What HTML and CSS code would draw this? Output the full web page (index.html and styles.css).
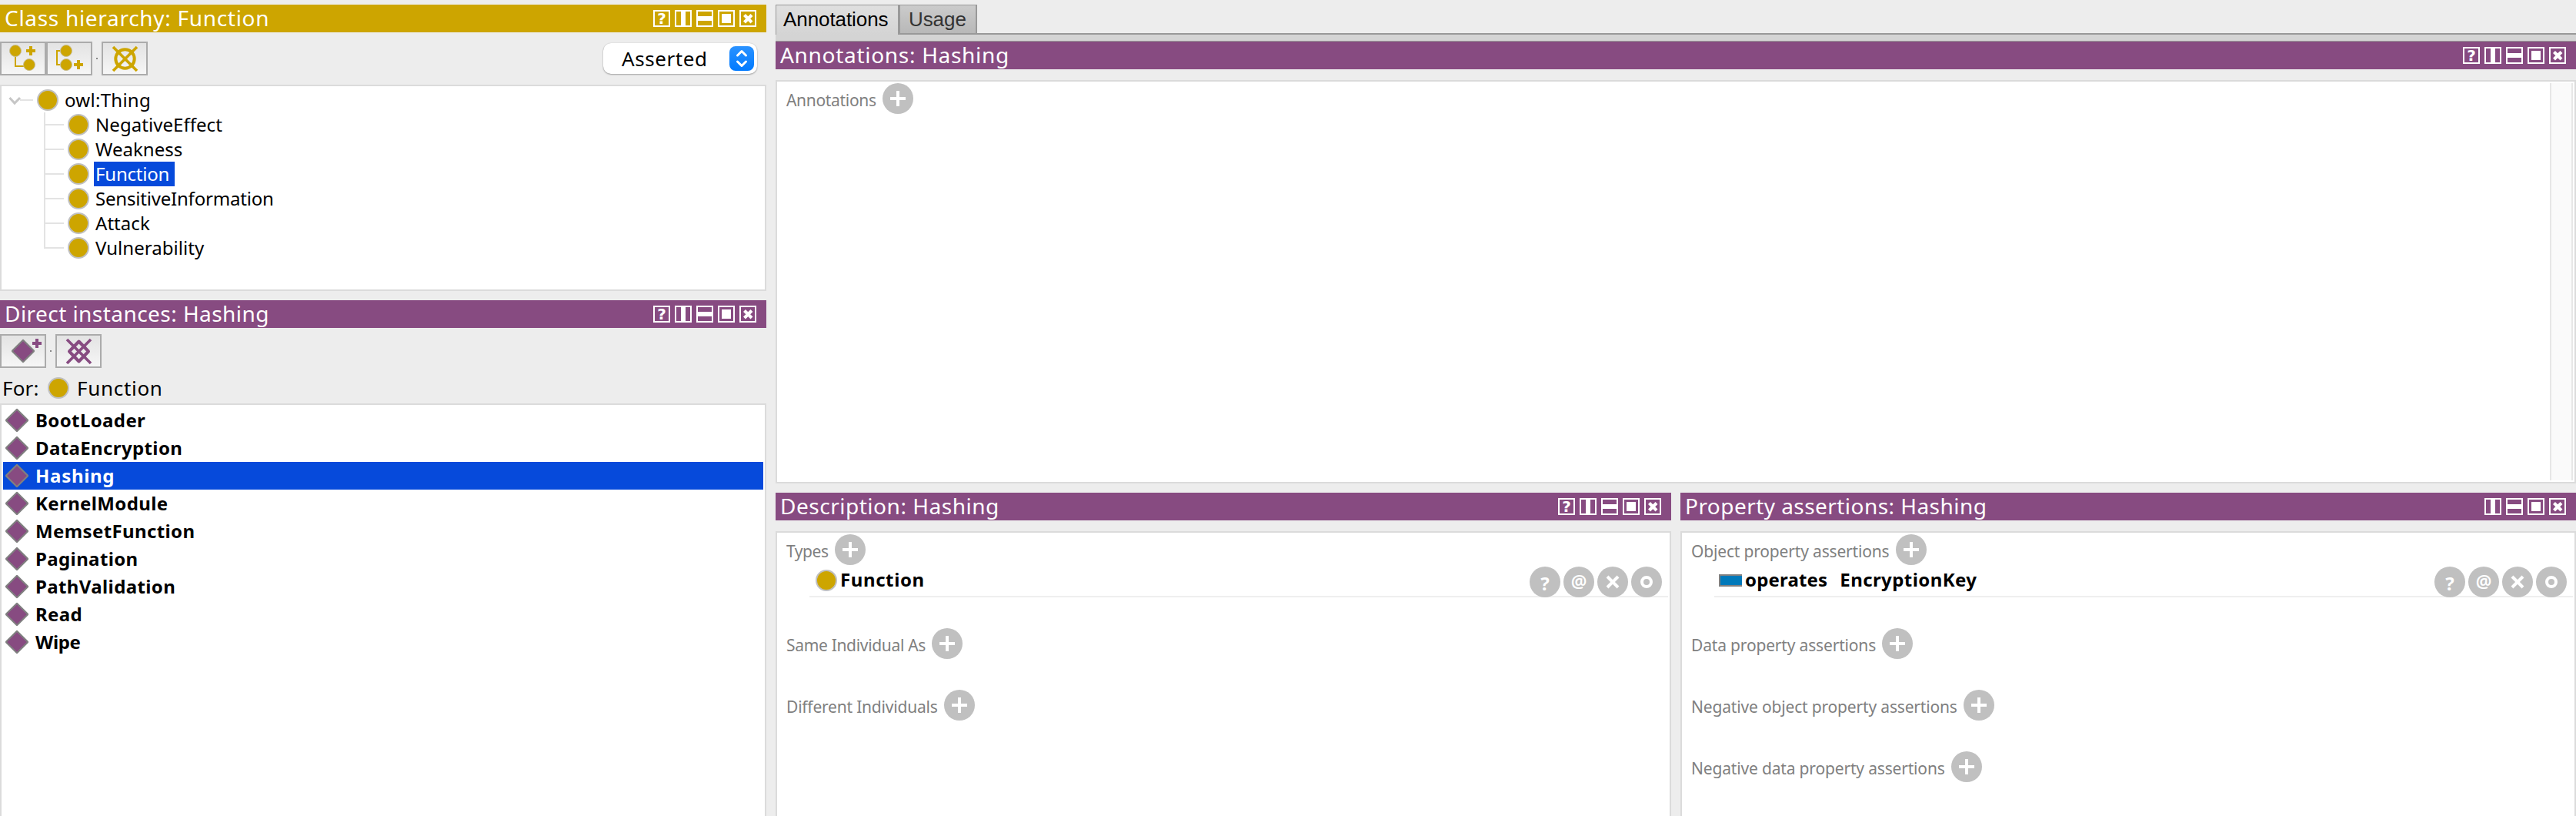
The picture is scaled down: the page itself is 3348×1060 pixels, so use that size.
FILE: index.html
```html
<!DOCTYPE html>
<html lang="en">
<head>
<meta charset="utf-8">
<title>Hashing</title>
<link rel="stylesheet" href="styles.css">
</head>
<body>
<svg class="defs" aria-hidden="true">
  <symbol id="cols" viewBox="0 0 22 22"><rect class="frame" x="1" y="1" width="20" height="20"/><path d="M8 1h6v20H8z"/></symbol>
  <symbol id="rows" viewBox="0 0 22 22"><rect class="frame" x="1" y="1" width="20" height="20"/><path d="M1 8h20v6H1z"/></symbol>
  <symbol id="max" viewBox="0 0 22 22"><rect class="frame" x="1" y="1" width="20" height="20"/><path d="M5 5h12v12H5z"/></symbol>
  <symbol id="close" viewBox="0 0 22 22"><rect class="frame" x="1" y="1" width="20" height="20"/><path d="M6.500 6.500l9.500 9.500M16 6.500l-9.500 9.500" stroke="#fff" stroke-width="4.2"/></symbol>
  <symbol id="class" viewBox="0 0 28 28"><circle cx="14" cy="14" r="13" fill="#cda500" stroke="#c0c0c0" stroke-width="2"/></symbol>
  <symbol id="individual" viewBox="0 0 32 32"><path d="M16 2.600L29.400 16 16 29.400 2.600 16z" fill="#874b81" stroke="#808080" stroke-width="3.4" stroke-linejoin="round"/><path d="M16 3.200L28.800 16 16 28.800 3.200 16z" fill="#874b81"/></symbol>
  <symbol id="add" viewBox="0 0 40 40"><circle cx="20" cy="20" r="20" fill="#c0c0c0"/><path d="M10 18h8v-8h4v8h8v4h-8v8h-4v-8h-8z" fill="#fff"/></symbol>
  <symbol id="a-del" viewBox="0 0 40 40"><circle cx="20" cy="20" r="20" fill="#c0c0c0"/><path d="M13 13l14 14M27 13L13 27" stroke="#fff" stroke-width="4"/></symbol>
  <symbol id="a-edit" viewBox="0 0 40 40"><circle cx="20" cy="20" r="20" fill="#c0c0c0"/><circle cx="20" cy="20" r="6" fill="none" stroke="#fff" stroke-width="4"/></symbol>
</svg>

<main class="app">
  <aside class="side">
    <section class="panel hierarchy">
      <header class="bar gold"><h2 class="k7">Class hierarchy: Function</h2>
        <div class="tools"><span class="help">?</span><svg><use href="#cols"/></svg><svg><use href="#rows"/></svg><svg><use href="#max"/></svg><svg><use href="#close"/></svg></div>
      </header>
      <div class="toolbar">
        <button class="tool"><svg viewBox="0 0 56 40"><path d="M18 12v18h16" fill="none" stroke="#cda500" stroke-width="2"/><g fill="#cda500" stroke="#c8bd92"><circle cx="18" cy="10" r="7.5"/><circle cx="36" cy="28" r="7.5"/></g><path d="M32 8h4V4h4v4h4v4h-4v4h-4v-4h-4z" fill="#cda500"/></svg></button>
        <button class="tool"><svg viewBox="0 0 56 40"><path d="M24 10H12v18h12" fill="none" stroke="#cda500" stroke-width="2"/><g fill="#cda500" stroke="#c8bd92"><circle cx="24" cy="10" r="7.5"/><circle cx="24" cy="28" r="7.5"/></g><path d="M34 26h4v-4h4v4h4v4h-4v4h-4v-4h-4z" fill="#cda500"/></svg></button>
        <i class="dot"></i>
        <button class="tool"><svg viewBox="0 0 56 40"><g fill="none" stroke="#cda500" stroke-width="4"><circle cx="28.5" cy="20.5" r="12.2"/><path d="M13 5l31 31M44 5L13 36" stroke-width="3.6"/></g></svg></button>
        <div class="combo"><span>Asserted</span><svg viewBox="0 0 32 32"><defs><linearGradient id="blue" x2="0" y2="1"><stop stop-color="#2a92ff"/><stop offset="1" stop-color="#017aff"/></linearGradient></defs><rect width="32" height="32" rx="8" fill="url(#blue)"/><path d="M10.500 12l5.500-5.500 5.500 5.500M10.500 20l5.500 5.500 5.500-5.500" fill="none" stroke="#fff" stroke-width="3" stroke-linecap="round" stroke-linejoin="round"/></svg></div>
      </div>
      <div class="well tree">
        <div class="node root"><svg class="twisty" viewBox="0 0 36 32"><path d="M16 16h17" stroke="#e3e3e3" stroke-width="2"/><path d="M2.500 13l6.500 7L16 13" fill="none" stroke="#c6c6c6" stroke-width="3"/></svg><svg class="ci"><use href="#class"/></svg><span class="k3">owl:Thing</span></div>
        <ul class="children">
          <li class="node"><svg class="ci"><use href="#class"/></svg><span class="k05">NegativeEffect</span></li>
          <li class="node"><svg class="ci"><use href="#class"/></svg><span class="k05">Weakness</span></li>
          <li class="node current"><svg class="ci"><use href="#class"/></svg><span class="m2">Function</span></li>
          <li class="node"><svg class="ci"><use href="#class"/></svg><span class="m2">SensitiveInformation</span></li>
          <li class="node"><svg class="ci"><use href="#class"/></svg><span class="k05">Attack</span></li>
          <li class="node"><svg class="ci"><use href="#class"/></svg><span class="k05">Vulnerability</span></li>
        </ul>
      </div>
    </section>

    <section class="panel instances">
      <header class="bar"><h2 class="k45">Direct instances: Hashing</h2>
        <div class="tools"><span class="help">?</span><svg><use href="#cols"/></svg><svg><use href="#rows"/></svg><svg><use href="#max"/></svg><svg><use href="#close"/></svg></div>
      </header>
      <div class="toolbar tight">
        <button class="tool"><svg viewBox="0 0 56 40"><use href="#individual" x="12" y="4" width="32" height="32"/><path d="M40 8h4V4h4v4h4v4h-4v4h-4v-4h-4z" fill="#874b81"/></svg></button>
        <i class="dot"></i>
        <button class="tool"><svg viewBox="0 0 56 40"><g fill="none" stroke="#874b81" stroke-width="3.6"><path d="M28.500 7.500L41 20.500 28.500 33.500 16 20.500z" stroke-width="4" stroke-linejoin="round"/><path d="M13 5l31 31M44 5L13 36"/></g></svg></button>
      </div>
      <div class="for"><span class="k2">For:</span><svg class="ci"><use href="#class"/></svg><span class="k7">Function</span></div>
      <ul class="well list">
        <li><svg><use href="#individual"/></svg><span>BootLoader</span></li>
        <li><svg><use href="#individual"/></svg><span>DataEncryption</span></li>
        <li class="current"><svg><use href="#individual"/></svg><span class="k7">Hashing</span></li>
        <li><svg><use href="#individual"/></svg><span>KernelModule</span></li>
        <li><svg><use href="#individual"/></svg><span>MemsetFunction</span></li>
        <li><svg><use href="#individual"/></svg><span>Pagination</span></li>
        <li><svg><use href="#individual"/></svg><span>PathValidation</span></li>
        <li><svg><use href="#individual"/></svg><span>Read</span></li>
        <li><svg><use href="#individual"/></svg><span class="m3">Wipe</span></li>
      </ul>
    </section>
  </aside>

  <div class="work">
    <nav class="tabs"><a class="tab on">Annotations</a><a class="tab">Usage</a></nav>
    <div class="strip"></div>
    <section class="panel annotations">
      <header class="bar"><h2 class="k7">Annotations: Hashing</h2>
        <div class="tools"><span class="help">?</span><svg><use href="#cols"/></svg><svg><use href="#rows"/></svg><svg><use href="#max"/></svg><svg><use href="#close"/></svg></div>
      </header>
      <div class="well split">
        <div class="group"><div class="label"><span class="m3">Annotations</span><svg><use href="#add"/></svg></div></div>
        <div class="scroll"></div>
      </div>
    </section>

    <div class="pair">
      <section class="panel">
        <header class="bar"><h2 class="k5">Description: Hashing</h2>
          <div class="tools"><span class="help">?</span><svg><use href="#cols"/></svg><svg><use href="#rows"/></svg><svg><use href="#max"/></svg><svg><use href="#close"/></svg></div>
        </header>
        <div class="well open">
          <div class="group">
            <div class="label"><span class="m4">Types</span><svg><use href="#add"/></svg></div>
            <div class="item"><svg class="ci"><use href="#class"/></svg><b class="k6">Function</b>
              <div class="acts"><span class="act">?</span><span class="act at">@</span><svg><use href="#a-del"/></svg><svg><use href="#a-edit"/></svg></div></div>
          </div>
          <div class="group"><div class="label"><span class="m3">Same Individual As</span><svg><use href="#add"/></svg></div></div>
          <div class="group"><div class="label"><span class="m2">Different Individuals</span><svg><use href="#add"/></svg></div></div>
        </div>
      </section>
      <section class="panel">
        <header class="bar"><h2 class="k45">Property assertions: Hashing</h2>
          <div class="tools"><svg><use href="#cols"/></svg><svg><use href="#rows"/></svg><svg><use href="#max"/></svg><svg><use href="#close"/></svg></div>
        </header>
        <div class="well open">
          <div class="group">
            <div class="label"><span>Object property assertions</span><svg><use href="#add"/></svg></div>
            <div class="item prop"><i class="swatch"></i><b class="k2">operates</b><b class="value">EncryptionKey</b>
              <div class="acts"><span class="act">?</span><span class="act at">@</span><svg><use href="#a-del"/></svg><svg><use href="#a-edit"/></svg></div></div>
          </div>
          <div class="group"><div class="label"><span>Data property assertions</span><svg><use href="#add"/></svg></div></div>
          <div class="group"><div class="label"><span>Negative object property assertions</span><svg><use href="#add"/></svg></div></div>
          <div class="group"><div class="label"><span>Negative data property assertions</span><svg><use href="#add"/></svg></div></div>
        </div>
      </section>
    </div>
  </div>
</main>
</body>
</html>
```
FILE: styles.css
```css
* { box-sizing: border-box; }
body { margin: 0; background: #ededed; color: #000; font-family: "Noto Sans", sans-serif; overflow: hidden; }
svg { display: block; flex: none; }
ul { list-style: none; margin: 0; padding: 0; }
span, b, h2, a { white-space: nowrap; }
.defs { position: absolute; width: 0; height: 0; }

.app { display: grid; grid-template-columns: 996px 1fr; column-gap: 12px; height: 1060px; }
.side, .work, .panel { display: flex; flex-direction: column; min-width: 0; min-height: 0; }
.side { padding-top: 6px; gap: 12px; }
.work { padding-top: 6px; }
.hierarchy { height: 372px; }
.instances { flex: 1; }

/* panel title bars */
.bar { display: flex; justify-content: space-between; flex: none; height: 36px; padding: 0 13px 0 6px; background: #874b81; color: #fff; }
.bar.gold { background: #cda500; }
.bar h2 { margin: 0; font-size: 28px; font-weight: 400; line-height: 34px; }
.tools { display: flex; gap: 6px; padding-top: 7px; }
.tools svg { width: 22px; height: 22px; fill: #fff; }
.frame { fill: none; stroke: #fff; stroke-width: 2px; }
.help { width: 22px; height: 22px; border: 2px solid #fff; font: 700 20px/19px "DejaVu Sans", sans-serif; text-align: center; }

/* toolbars */
.toolbar { display: flex; align-items: center; flex: none; height: 68px; padding: 0 12px 0 0; }
.toolbar.tight { height: 52px; padding-top: 8px; }
.tool { width: 60px; height: 44px; padding: 0; border: 2px solid #ababab; background: linear-gradient(#e3e3e3, #f6f6f6); }
.tool svg { width: 56px; height: 40px; }
.dot { width: 2px; height: 2px; margin: 0 5px; background: #888; }
.combo { display: flex; align-items: center; justify-content: space-between; width: 200px; height: 40px; margin-left: auto; padding: 0 4px 0 24px; border-radius: 10px; background: #fff; box-shadow: 0 1px 2px rgba(0,0,0,.3), 0 0 1px rgba(0,0,0,.25); font-size: 26px; line-height: 40px; letter-spacing: .58px; }
.combo svg { width: 32px; height: 32px; }

/* content wells */
.well { flex: 1; min-height: 0; border: 2px solid #dbdbdb; background: #fff; }
.ci { width: 28px; height: 28px; }
.tree { padding-top: 2px; font-size: 24px; line-height: 32px; }
.node { display: flex; align-items: center; height: 32px; }
.node.root { padding-left: 8px; }
.twisty { width: 36px; height: 32px; margin-right: 2px; }
.root .ci { margin-right: 8px; }
.children { margin-left: 55px; background: linear-gradient(#e3e3e3, #e3e3e3) 0 0 / 2px 177px no-repeat; }
.children .node { padding-left: 31px; background: linear-gradient(#e3e3e3, #e3e3e3) 0 15px / 26px 2px no-repeat; }
.children span { margin-left: 6px; padding: 0 5px 0 2px; }
.children .current span { padding-right: 7px; background: #064adb; color: #fff; }

.for { display: flex; align-items: center; flex: none; height: 46px; padding: 6px 0 0 3px; font-size: 26px; line-height: 40px; }
.for span:first-child { width: 59px; }
.for .ci { margin-right: 10px; }
.list { padding: 2px; border-bottom: 0; font-size: 24px; font-weight: 700; line-height: 36px; letter-spacing: .38px; }
.list li { display: flex; align-items: center; height: 36px; padding-left: 2px; gap: 8px; }
.list svg { width: 32px; height: 32px; }
.list .current { background: #064adb; color: #fff; }

/* tabs */
.tabs { display: flex; flex: none; height: 37px; }
.tab { height: 39px; padding: 0 13px 0 9px; border: solid #999; border-width: 1px 2px 0 1px; background: linear-gradient(#cbcbcb, #b8b8b8); color: #333; font: 26px/36px "Liberation Sans", sans-serif; letter-spacing: -.08px; }
.tab.on { width: 161px; background: linear-gradient(#dfdfdf, #d4d4d4); color: #000; z-index: 1; }
.tab:not(.on) { width: 101px; height: 37px; padding-left: 11px; }
.strip { flex: none; height: 11px; border-top: 2px solid #999; border-bottom: 1px solid #999; background: #d4d4d4; }

/* entity frames */
.annotations { height: 574px; flex: none; }
.bar + .well { margin-top: 14px; }
.split { display: flex; justify-content: space-between; padding: 2px; }
.split .group { padding-left: 10px; }
.scroll { width: 30px; border: solid #e7e7e7; border-width: 0 2px; background: #fafafa; }
.pair { display: grid; grid-template-columns: 1fr 1fr; gap: 12px; flex: 1; min-height: 0; margin-top: 12px; }
.open { display: flex; flex-direction: column; gap: 40px; padding: 2px 2px 0 12px; border-bottom: 0; }
.label { display: flex; align-items: center; gap: 8px; height: 40px; color: #808080; font-size: 21px; line-height: 36px; letter-spacing: -.17px; }
.label span { padding-top: 4px; }
.label svg, .acts svg { width: 40px; height: 40px; }
.item { display: flex; align-items: flex-start; height: 40px; margin: 2px 0 0 30px; padding-left: 8px; background: linear-gradient(#efefef, #efefef) 0 38px / 100% 2px no-repeat; font-size: 24px; line-height: 34px; }
.item .ci { margin: 4px 4px 0 0; }
.item.prop { padding-left: 6px; letter-spacing: .42px; }
.swatch { width: 30px; height: 16px; margin: 10px 4px 0 0; border: 2px solid #808080; border-right: 0; background: #0079ba; }
.value { margin-left: 16px; }
.acts { display: flex; gap: 4px; margin: 0 8px 0 auto; letter-spacing: 0; }
.act { width: 40px; height: 40px; border-radius: 50%; background: #c0c0c0; color: #fff; font-size: 24px; font-weight: 700; line-height: 44px; text-align: center; }
.act.at { font-size: 23px; font-weight: 600; line-height: 38px; }

/* tracking steps */
.k05 { letter-spacing: .05px; }
.k2 { letter-spacing: .17px; }
.k3 { letter-spacing: .28px; }
.k45 { letter-spacing: .45px; }
.k5 { letter-spacing: .52px; }
.k6 { letter-spacing: .59px; }
.k7 { letter-spacing: .7px; }
.m2 { letter-spacing: -.2px; }
.m3 { letter-spacing: -.32px; }
.m4 { letter-spacing: -.43px; }
```
